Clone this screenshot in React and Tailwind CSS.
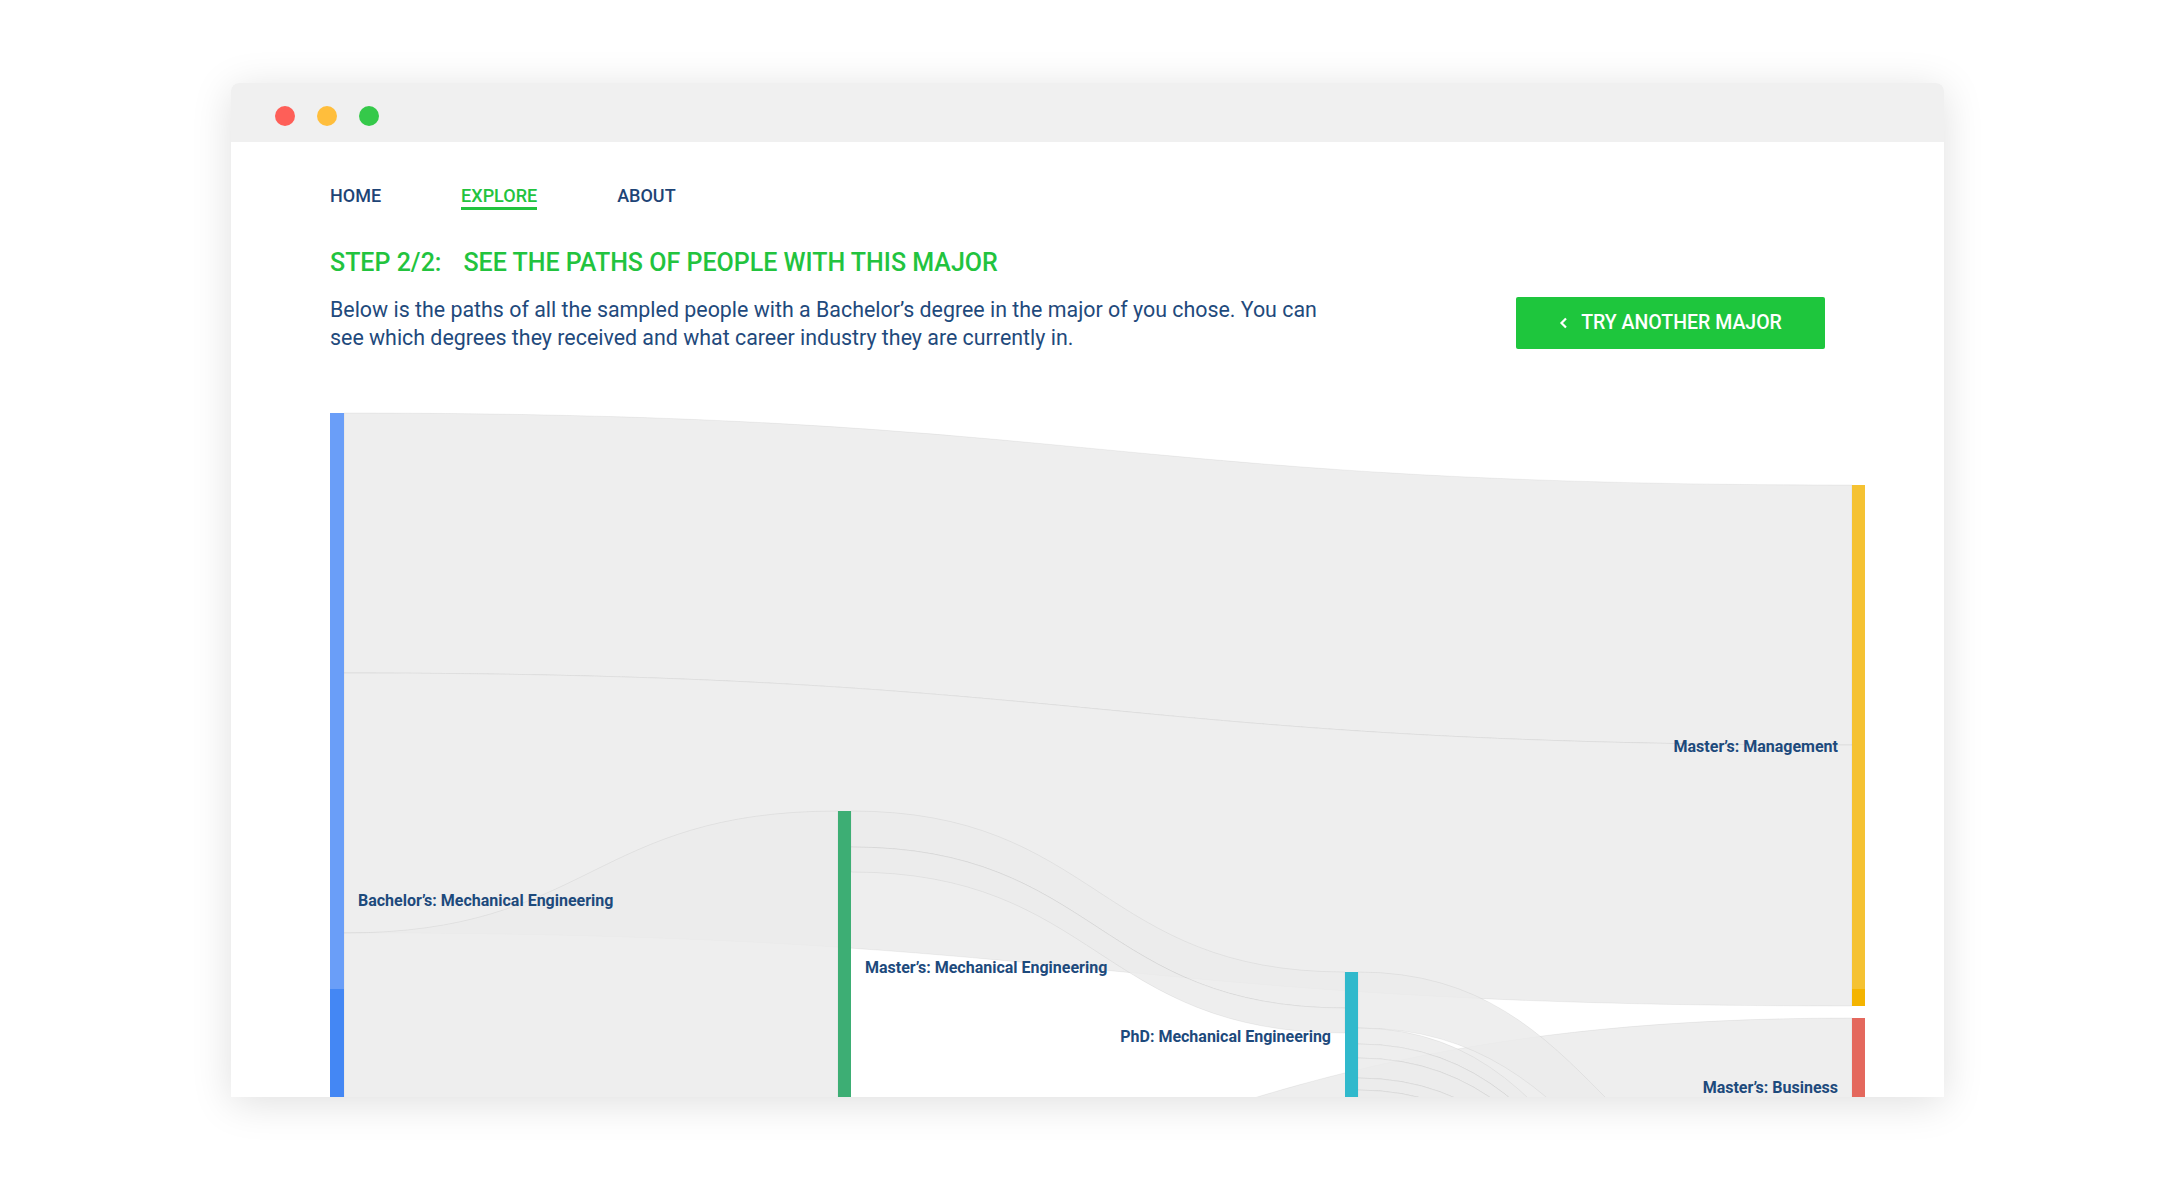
import React from "react";

// Sankey geometry in page pixels (viewBox starts at the window's left edge)
const LINKS = [
  // [x0, top0, bottom0, x1, top1, bottom1]
  [344, 413, 673, 1852, 485, 745],
  [344, 673, 933, 1852, 745, 1006],
  [344, 933, 1282, 838, 811, 1160],
  [344, 1282, 1387, 1852, 1018, 1123],
  [851, 811, 847, 1345, 972, 1008],
  [851, 847, 872, 1345, 1008, 1033],
  [1358, 972, 1028, 1852, 1222, 1278],
  [1358, 1028, 1044, 1852, 1347, 1363],
  [1358, 1044, 1058, 1852, 1363, 1377],
  [1358, 1058, 1078, 1852, 1377, 1397],
  [1358, 1078, 1090, 1852, 1397, 1409],
  [1358, 1090, 1100, 1852, 1409, 1419],
];

const BARS = [
  { x: 330, y: 413, w: 14, h: 576, fill: "#6a9ef8" },
  { x: 330, y: 989, w: 14, h: 398, fill: "#4487f4" },
  { x: 838, y: 811, w: 13, h: 312, fill: "#3dae74" },
  { x: 1345, y: 972, w: 13, h: 128, fill: "#30b9cc" },
  { x: 1852, y: 485, w: 13, h: 504, fill: "#f5c232" },
  { x: 1852, y: 989, w: 13, h: 17, fill: "#f4b400" },
  { x: 1852, y: 1018, w: 13, h: 146, fill: "#e4685d" },
];

const LABELS = [
  { x: 358, y: 900, text: "Bachelor’s: Mechanical Engineering", anchor: "start" },
  { x: 865, y: 967, text: "Master’s: Mechanical Engineering", anchor: "start" },
  { x: 1331, y: 1036, text: "PhD: Mechanical Engineering", anchor: "end" },
  { x: 1838, y: 746, text: "Master’s: Management", anchor: "end" },
  { x: 1838, y: 1087, text: "Master’s: Business", anchor: "end" },
];

function linkPath([x0, a0, b0, x1, a1, b1]) {
  const xm = (x0 + x1) / 2;
  return `M${x0},${a0} C${xm},${a0} ${xm},${a1} ${x1},${a1} L${x1},${b1} C${xm},${b1} ${xm},${b0} ${x0},${b0} Z`;
}

function Sankey() {
  return (
    <svg
      className="mt-[48px] block shrink-0"
      width="1713"
      height="697"
      viewBox="231 400 1713 697"
    >
      {LINKS.map((l, i) => (
        <path
          key={i}
          d={linkPath(l)}
          fill="#ebebeb"
          fillOpacity="0.85"
          stroke="#000"
          strokeOpacity="0.05"
          strokeWidth="1"
        />
      ))}
      {BARS.map((b, i) => (
        <rect key={i} x={b.x} y={b.y} width={b.w} height={b.h} fill={b.fill} />
      ))}
      {LABELS.map((t) => (
        <text
          key={t.text}
          x={t.x}
          y={t.y}
          dy="0.35em"
          textAnchor={t.anchor}
          fontFamily="Roboto, sans-serif"
          fontWeight="700"
          fontSize="16"
          fill="#1d4a7c"
        >
          {t.text}
        </text>
      ))}
    </svg>
  );
}

export default function App() {
  return (
    <div className="min-h-[1180px] w-full bg-white pl-[231px] pt-[83px] font-['Roboto',sans-serif]">
      <div className="flex h-[1014px] w-[1713px] flex-col overflow-hidden rounded-t-[8px] bg-white shadow-[0_6px_40px_rgba(0,0,0,0.13)]">
        {/* Window chrome */}
        <div className="flex h-[59px] shrink-0 items-start gap-[22px] bg-[#f0f0f0] pl-[44px] pt-[23px]">
          <span className="h-5 w-5 rounded-full bg-[#fe5f58]" />
          <span className="h-5 w-5 rounded-full bg-[#ffbe3c]" />
          <span className="h-5 w-5 rounded-full bg-[#35c94a]" />
        </div>

        <div className="shrink-0 pl-[99px] pr-[119px]">
          {/* Nav */}
          <nav className="mt-[42px] flex gap-[80px] text-[18px] font-medium leading-[23px]">
            <a className="border-b-[3px] border-transparent text-[#1e4476]">HOME</a>
            <a className="border-b-[3px] border-[#22c33e] text-[#22c33e]">EXPLORE</a>
            <a className="border-b-[3px] border-transparent text-[#1e4476]">ABOUT</a>
          </nav>

          <h1 className="mt-[38px] text-[25px] font-medium leading-[29px] text-[#22c33e]">
            STEP 2/2:<span className="ml-[22px]">SEE THE PATHS OF PEOPLE WITH THIS MAJOR</span>
          </h1>

          <div className="mt-[19px] flex items-start justify-between">
            <p className="w-[1010px] text-[21.4px] leading-[28px] text-[#1f4a7c]">
              Below is the paths of all the sampled people with a Bachelor’s degree in the major of you chose. You can see which degrees they received and what career industry they are currently in.
            </p>
            <button className="mt-[1px] flex h-[52px] w-[309px] items-center justify-center gap-[13px] rounded-[2px] bg-[#1ec63d] text-[19.5px] font-medium text-white">
              <svg width="9" height="12" viewBox="0 0 9 12">
                <polyline points="7,1.5 2.5,6 7,10.5" fill="none" stroke="#fff" strokeWidth="2.2" />
              </svg>
              TRY ANOTHER MAJOR
            </button>
          </div>
        </div>

        <Sankey />
      </div>
    </div>
  );
}
